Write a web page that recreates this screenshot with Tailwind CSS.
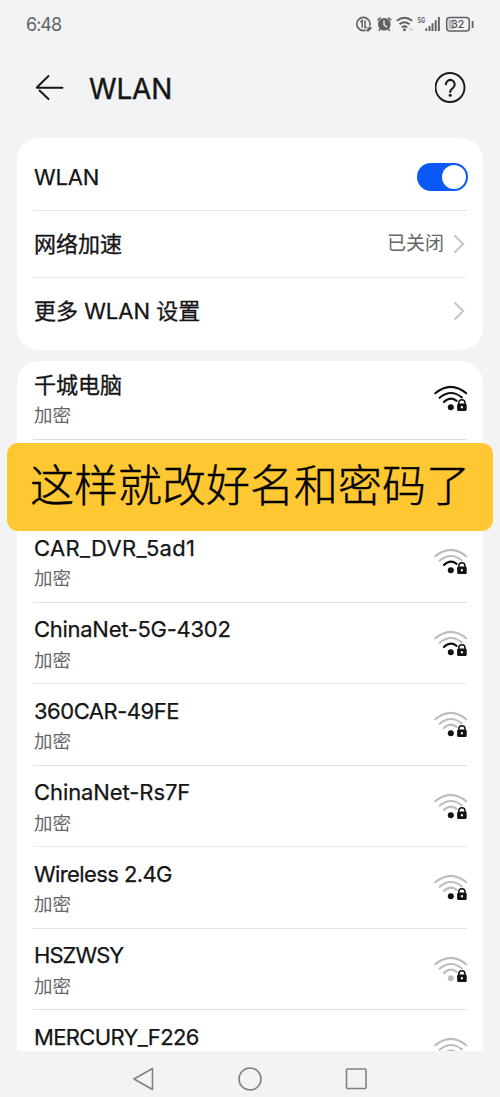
<!DOCTYPE html>
<html lang="zh-CN">
<head>
<meta charset="utf-8">
<title>WLAN</title>
<script src="https://cdn.jsdelivr.net/npm/@tailwindcss/browser@4"></script>
</head>
<body class="bg-[#f1f3f5]">
<svg class="hidden">
  <symbol id="a3" viewBox="0 0 34 28"><path d="M1.3 8.3Q16.8-4.6 32.2 8.3" fill="none" stroke="currentColor" stroke-width="2.1" stroke-linecap="round"/></symbol>
  <symbol id="a2" viewBox="0 0 34 28"><path d="M5.6 12.8Q16.8 3.4 27.8 12.4" fill="none" stroke="currentColor" stroke-width="2.1" stroke-linecap="round"/></symbol>
  <symbol id="a1" viewBox="0 0 34 28"><path d="M9.9 17.1Q16.2 11 22.6 15.8" fill="none" stroke="currentColor" stroke-width="2.1" stroke-linecap="round"/></symbol>
  <symbol id="dot" viewBox="0 0 34 28"><circle cx="16.8" cy="22.3" r="3" fill="currentColor"/></symbol>
  <symbol id="lock" viewBox="0 0 34 28"><path d="M24.8 19v-1.2a3.1 3.1 0 0 1 6.2 0V19" fill="none" stroke="#111" stroke-width="1.5"/><path fill-rule="evenodd" fill="#111" d="M24.6 18.4h6.6a1.5 1.5 0 0 1 1.5 1.5v4.6a1.5 1.5 0 0 1-1.5 1.5h-6.6a1.5 1.5 0 0 1-1.5-1.5v-4.6a1.5 1.5 0 0 1 1.5-1.5zM27.9 21a1.2 1.2 0 1 0 .01 0z"/></symbol>
</svg>
<div class="relative flex h-[1097px] w-[500px] flex-col overflow-hidden bg-[#f1f3f5] font-[Inter,'Noto_Sans_CJK_SC',sans-serif] text-[#151515]">
  <header class="flex h-12 shrink-0 items-center justify-between pr-[26px] pl-[26px] text-[#626364]">
    <span class="mt-0.5 text-[18px] leading-6 tracking-[-1px]">6:48</span>
    <svg class="h-5 w-[120px]" viewBox="354 14 120 20" fill="none" stroke="#5f6061">
      <circle cx="363.4" cy="24" r="6.6" stroke-width="1.6"/>
      <path d="M360.3 22.2l1.900-1.700v7.300M365 20.300v7.200h2.500" stroke-width="1.500"/>
      <path d="M365.500 32l2-4.800 4.500-1.300v3l-3.500 3z" fill="#5f6061" stroke="#f1f3f5" stroke-width="1"/>
      <circle cx="384.300" cy="24.300" r="6.300" fill="#5f6061" stroke="none"/>
      <path d="M377.500 20.300l3-2.800M391.200 20.300l-3-2.800M380.300 29l-1.500 1.800M388.300 29l1.500 1.800" stroke-width="1.600"/>
      <path d="M384 20.500v4.200l3 2.500" stroke="#f1f3f5" stroke-width="1.400"/>
      <path d="M396.800 20.800Q404.500 14.800 412.200 20.800M399.500 24.200Q404.500 20.200 409.500 24.200M401.800 27.400Q404.500 25.200 407.200 27.400" stroke-width="1.900"/>
      <circle cx="404.500" cy="29.700" r="1.500" fill="#5f6061" stroke="none"/>
      <path d="M409 29.500h4" stroke="#c2c3c4" stroke-width="1.800" stroke-dasharray="1.500 1"/>
      <text x="417.500" y="22.600" fill="#5f6061" stroke="none" font-size="7.500" font-weight="700" textLength="7.500" lengthAdjust="spacingAndGlyphs">5G</text>
      <path d="M426.300 28.300v2.700M429.500 26v5M432.500 23.300v7.700M435.700 20.300v10.700M438.900 17v14" stroke-width="1.900"/>
      <rect x="448.500" y="19.500" width="5.500" height="9.500" fill="#b7b8b9" stroke="none"/>
      <rect x="446.700" y="17.600" width="22.600" height="13.400" rx="3" stroke-width="1.500"/>
      <path d="M472.600 21v7" stroke-width="1.700"/>
      <text x="451.300" y="28.300" fill="#4f5051" stroke="none" font-size="11" font-weight="500" textLength="13" lengthAdjust="spacingAndGlyphs">32</text>
    </svg>
  </header>
  <div class="flex h-[90px] shrink-0 items-start pt-5 pr-[33px] pl-[35px]">
    <svg class="mt-1.5 h-7 w-[30px]" viewBox="35 74 30 28" fill="none" stroke="#151515" stroke-width="1.900" stroke-linecap="round" stroke-linejoin="round"><path d="M62.500 87.800H37M48.500 76L36.800 87.500M39.500 90.500L48.500 99"/></svg>
    <h1 class="ml-[24px] text-[28px] leading-[42px] tracking-[-0.200px] [-webkit-text-stroke:0.400px_#151515]">WLAN</h1>
    <svg class="mt-[3px] ml-auto h-8 w-8" viewBox="0 0 32 32" fill="none" stroke="#1a1a1a" stroke-width="1.900"><circle cx="15" cy="16.500" r="14.500"/><path d="M10.900 13.200a4.400 4.400 0 1 1 7.200 3.500C16 18.300 15.200 18.900 15.200 21" stroke-width="2.100" stroke-linecap="round"/><circle cx="15.200" cy="24.300" r="1.500" fill="#1a1a1a" stroke="none"/></svg>
  </div>
  <section class="mx-[17px] h-[211.500px] shrink-0 rounded-[22px] bg-white px-4 pt-[6px] text-[22px]">
    <div class="flex h-[67px] items-center justify-between border-b border-[#e4e4e4] pl-px"><span class="tracking-[-0.200px] [-webkit-text-stroke:0.250px_#151515]">WLAN</span>
      <span class="-mr-px flex h-[28px] w-[51px] items-center justify-end rounded-full bg-[#0a59f7]"><i class="mr-0.5 block size-[24px] rounded-full bg-white"></i></span></div>
    <div class="flex h-[67px] items-center border-b border-[#ebebeb] pl-px"><span class="[-webkit-text-stroke:0.350px_#151515]">网络加速</span><span class="mt-px mr-[9px] ml-auto text-[19px] text-[#666]">已关闭</span>
      <svg class="mr-0.5 h-5 w-3" viewBox="0 0 12 20" fill="none" stroke="#c4c4c4" stroke-width="1.900"><path d="M1.500 1.500l8.700 8.500-8.700 8.500"/></svg></div>
    <div class="flex h-[67px] items-center justify-between pl-px"><span class="whitespace-nowrap [-webkit-text-stroke:0.300px_#151515]">更多 WLAN 设置</span>
      <svg class="mr-0.5 mb-0.5 h-5 w-3" viewBox="0 0 12 20" fill="none" stroke="#c4c4c4" stroke-width="1.900"><path d="M1.500 1.500l8.700 8.500-8.700 8.500"/></svg></div>
  </section>
  <section class="mx-[17px] mt-[11.500px] h-[690px] shrink-0 overflow-hidden rounded-t-[22px] bg-white px-4">
    <div class="-mt-[3px] [&_svg]:-mr-[0.700px]">
      <div class="flex h-[81.500px] justify-between border-b border-[#dedede] pl-px"><div class="pt-[9.500px]"><p class="text-[22px] leading-[34px] [-webkit-text-stroke:0.350px_#151515]">千城电脑</p><p class="mt-[-0.500px] text-[18.500px] leading-7 text-[#666]">加密</p></div>
        <svg class="mt-[27px] h-7 w-[34px] text-[#111]"><use href="#a3"/><use href="#a2"/><use href="#a1"/><use href="#dot"/><use href="#lock"/></svg></div>
      <div class="h-[81.500px]"></div>
      <div class="flex h-[81.500px] justify-between border-b border-[#e2e2e2] pl-px"><div class="pt-[9.500px]"><p class="text-[22px] leading-[34px] tracking-[0.330px] [-webkit-text-stroke:0.250px_#151515]">CAR_DVR_5ad1</p><p class="mt-[-0.500px] text-[18.500px] leading-7 text-[#666]">加密</p></div>
        <svg class="mt-[27px] h-7 w-[34px] text-[#bdbdbd]"><use href="#a3"/><use href="#a2"/><g class="text-[#111]"><use href="#a1"/><use href="#dot"/></g><use href="#lock"/></svg></div>
      <div class="flex h-[81.500px] justify-between border-b border-[#ebebeb] pl-px"><div class="pt-[9.500px]"><p class="text-[22px] leading-[34px] tracking-[-0.280px] [-webkit-text-stroke:0.250px_#151515]">ChinaNet-5G-4302</p><p class="mt-[-0.500px] text-[18.500px] leading-7 text-[#666]">加密</p></div>
        <svg class="mt-[27px] h-7 w-[34px] text-[#bdbdbd]"><use href="#a3"/><use href="#a2"/><g class="text-[#111]"><use href="#a1"/><use href="#dot"/></g><use href="#lock"/></svg></div>
      <div class="flex h-[81.500px] justify-between border-b border-[#e2e2e2] pl-px"><div class="pt-[9.500px]"><p class="text-[22px] leading-[34px] tracking-[-0.480px] [-webkit-text-stroke:0.250px_#151515]">360CAR-49FE</p><p class="mt-[-0.500px] text-[18.500px] leading-7 text-[#666]">加密</p></div>
        <svg class="mt-[27px] h-7 w-[34px] text-[#bdbdbd]"><use href="#a3"/><use href="#a2"/><use href="#a1"/><g class="text-[#111]"><use href="#dot"/></g><use href="#lock"/></svg></div>
      <div class="flex h-[81.500px] justify-between border-b border-[#ebebeb] pl-px"><div class="pt-[9.500px]"><p class="text-[22px] leading-[34px] tracking-[-0.080px] [-webkit-text-stroke:0.250px_#151515]">ChinaNet-Rs7F</p><p class="mt-[-0.500px] text-[18.500px] leading-7 text-[#666]">加密</p></div>
        <svg class="mt-[27px] h-7 w-[34px] text-[#bdbdbd]"><use href="#a3"/><use href="#a2"/><use href="#a1"/><g class="text-[#111]"><use href="#dot"/></g><use href="#lock"/></svg></div>
      <div class="flex h-[81.500px] justify-between border-b border-[#e2e2e2] pl-px"><div class="pt-[9.500px]"><p class="text-[22px] leading-[34px] tracking-[-0.600px] [-webkit-text-stroke:0.250px_#151515]">Wireless 2.4G</p><p class="mt-[-0.500px] text-[18.500px] leading-7 text-[#666]">加密</p></div>
        <svg class="mt-[27px] h-7 w-[34px] text-[#bdbdbd]"><use href="#a3"/><use href="#a2"/><use href="#a1"/><g class="text-[#111]"><use href="#dot"/></g><use href="#lock"/></svg></div>
      <div class="flex h-[81.500px] justify-between border-b border-[#e2e2e2] pl-px"><div class="pt-[9.500px]"><p class="text-[22px] leading-[34px] tracking-[-0.950px] [-webkit-text-stroke:0.250px_#151515]">HSZWSY</p><p class="mt-[-0.500px] text-[18.500px] leading-7 text-[#666]">加密</p></div>
        <svg class="mt-[27px] h-7 w-[34px] text-[#bdbdbd]"><use href="#a3"/><use href="#a2"/><use href="#a1"/><use href="#dot"/><use href="#lock"/></svg></div>
      <div class="flex h-[81.500px] justify-between pl-px"><div class="pt-[9.500px]"><p class="text-[22px] leading-[34px] tracking-[-0.650px] [-webkit-text-stroke:0.250px_#151515]">MERCURY_F226</p></div>
        <svg class="mt-[27px] h-7 w-[34px] text-[#bdbdbd]"><use href="#a3"/><use href="#a2"/><use href="#a1"/></svg></div>
    </div>
  </section>
  <nav class="flex h-[46px] items-center justify-center gap-[82px] pt-[9px]">
    <svg class="size-6" viewBox="0 0 24 24" fill="none" stroke="#808182" stroke-width="1.600" stroke-linejoin="round"><path d="M20.500 1.500v21L2 12z"/></svg>
    <svg class="size-6" viewBox="0 0 24 24" fill="none" stroke="#808182" stroke-width="1.600"><circle cx="12" cy="12" r="11"/></svg>
    <svg class="size-6" viewBox="0 0 24 24" fill="none" stroke="#808182" stroke-width="1.600"><rect x="2.500" y="2" width="19.500" height="19.500" rx="1"/></svg>
  </nav>
  <div class="absolute top-[442.500px] left-[7px] flex h-[88.500px] w-[486px] items-center justify-center rounded-[11px] bg-[#ffc832]">
    <span class="-mt-0.5 text-[44px] leading-none font-light whitespace-nowrap text-black [-webkit-text-stroke:0.400px_black]">这样就改好名和密码了</span>
  </div>
</div>
</body>
</html>
